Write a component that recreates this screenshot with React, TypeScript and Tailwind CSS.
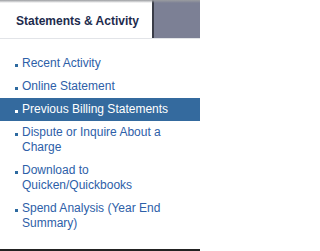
import React from "react";

const items: { label: string[]; active?: boolean }[] = [
  { label: ["Recent Activity"] },
  { label: ["Online Statement"] },
  { label: ["Previous Billing Statements"], active: true },
  { label: ["Dispute or Inquire About a", "Charge"] },
  { label: ["Download to", "Quicken/Quickbooks"] },
  { label: ["Spend Analysis (Year End", "Summary)"] },
];

export default function App() {
  return (
    <div
      className="w-[200px] h-[251px] bg-white overflow-hidden flex flex-col"
      style={{ fontFamily: '"Liberation Sans", Arial, sans-serif' }}
    >
      <div className="h-[39px] flex border-b border-[#e2e4e8] relative">
        <div className="absolute left-0 right-0 top-0 h-[3px] bg-gradient-to-b from-[#9a9ca0] to-transparent" />
        <div className="w-[152px] flex items-center pl-[16px] pt-[3px]">
          <span className="text-[12px] font-bold text-[#1d2b4d]">Statements &amp; Activity</span>
        </div>
        <div className="w-[2px] bg-[#3a3d48]" />
        <div className="flex-1 bg-[#7c8095]" />
      </div>
      <ul className="flex flex-col pt-[13px] flex-1">
        {items.map((it, i) => (
          <li
            key={i}
            className={`flex pl-[15px] pr-2 py-[4px] ${it.active ? "bg-[#346a9e] text-white" : "text-[#2d60a8]"}`}
          >
            <span
              className={`mt-[8px] w-[3px] h-[3px] shrink-0 ${it.active ? "bg-white" : "bg-[#2d6aa0]"}`}
            />
            <span className="ml-[4px] text-[12px] leading-[15px]">
              {it.label.map((l, j) => (
                <span key={j} className="block">
                  {l}
                </span>
              ))}
            </span>
          </li>
        ))}
      </ul>
      <div className="h-[2px] bg-[#222]" />
    </div>
  );
}
